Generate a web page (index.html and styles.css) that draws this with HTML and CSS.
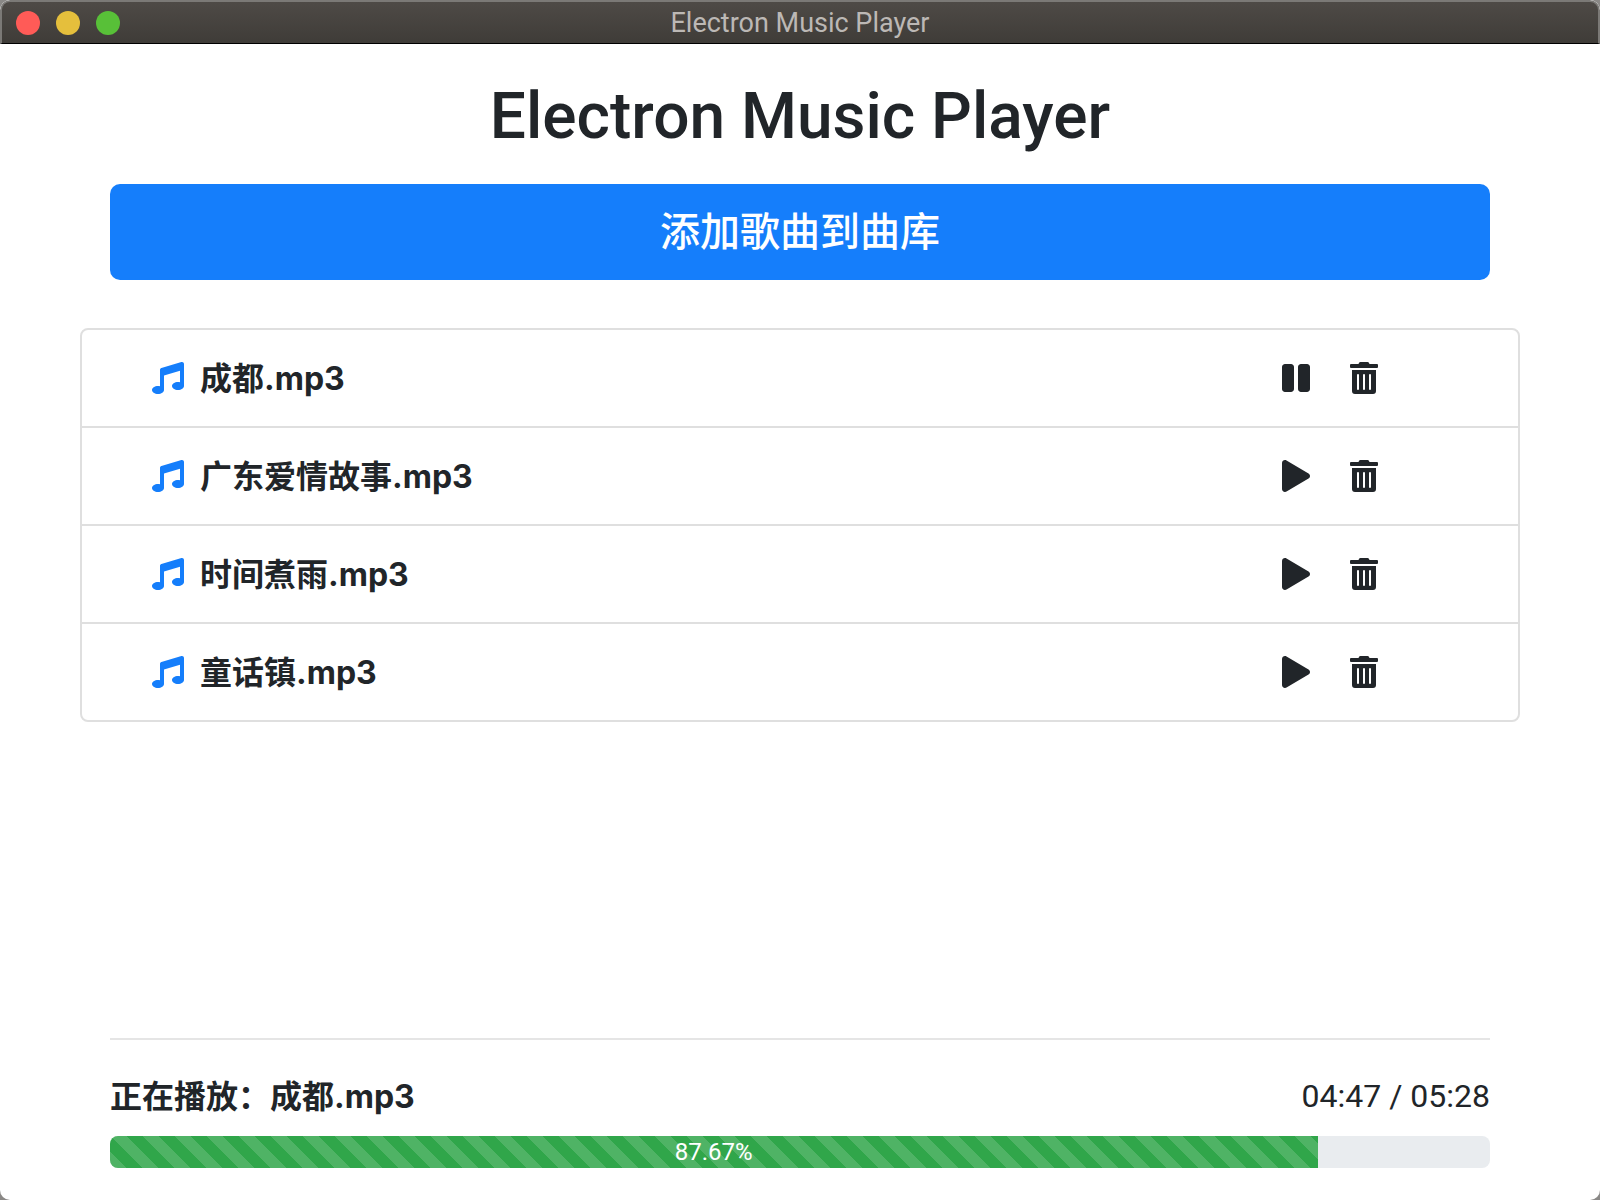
FILE: index.html
```html
<!DOCTYPE html>
<html lang="zh-CN">
<head>
<meta charset="utf-8">
<meta name="viewport" content="width=device-width, initial-scale=1">
<title>Electron Music Player</title>
<link rel="stylesheet" href="styles.css">
</head>
<body>
<svg class="sprite" aria-hidden="true">
  <symbol id="music" viewBox="0 0 512 512"><path d="M511.99 32.01c0-21.71-21.1-37.01-41.6-30.51L150.4 96c-13.3 4.2-22.4 16.5-22.4 30.5v261.42C117.7 385.55 107.1 384 96 384c-53.02 0-96 28.65-96 64s42.98 64 96 64 96-28.65 96-64V214.31l256-75.02v184.63c-10.3-2.37-20.9-3.92-32-3.92-53.02 0-96 28.65-96 64s42.98 64 96 64 96-28.65 96-64l-.01-351.99z"/></symbol>
  <symbol id="play" viewBox="0 0 448 512"><path d="M424.4 214.7L72.4 6.6C43.8-10.3 0 6.1 0 47.9V464c0 37.5 40.7 60.1 72.4 41.3l352-208c31.4-18.5 31.5-64.1 0-82.6z"/></symbol>
  <symbol id="pause" viewBox="0 0 448 512"><path d="M144 479H48c-26.5 0-48-21.5-48-48V79c0-26.5 21.5-48 48-48h96c26.5 0 48 21.5 48 48v352c0 26.5-21.5 48-48 48zm304-48V79c0-26.5-21.5-48-48-48h-96c-26.5 0-48 21.5-48 48v352c0 26.5 21.5 48 48 48h96c26.5 0 48-21.5 48-48z"/></symbol>
  <symbol id="trash" viewBox="0 0 448 512"><path d="M32 464a48 48 0 0 0 48 48h288a48 48 0 0 0 48-48V128H32zm272-256a16 16 0 0 1 32 0v224a16 16 0 0 1-32 0zm-96 0a16 16 0 0 1 32 0v224a16 16 0 0 1-32 0zm-96 0a16 16 0 0 1 32 0v224a16 16 0 0 1-32 0zM432 32H312l-9.4-18.7A24 24 0 0 0 281.1 0H166.8a23.72 23.72 0 0 0-21.4 13.3L136 32H16A16 16 0 0 0 0 48v32a16 16 0 0 0 16 16h416a16 16 0 0 0 16-16V48a16 16 0 0 0-16-16z"/></symbol>
</svg>
<div class="window">
  <header class="titlebar">
    <div class="lights">
      <button class="light close" type="button" aria-label="Close"></button>
      <button class="light minimize" type="button" aria-label="Minimize"></button>
      <button class="light zoom" type="button" aria-label="Zoom"></button>
    </div>
    <span class="window-title">Electron Music Player</span>
  </header>
  <main class="content">
    <h1 class="heading">Electron Music Player</h1>
    <button class="add-button" type="button">添加歌曲到曲库</button>
    <ul class="tracks">
      <li class="track">
        <svg class="note"><use href="#music"/></svg>
        <b class="name">成都.mp3</b>
        <div class="actions">
          <button class="action" type="button" aria-label="Pause"><svg class="icon"><use href="#pause"/></svg></button>
          <button class="action" type="button" aria-label="Delete"><svg class="icon"><use href="#trash"/></svg></button>
        </div>
      </li>
      <li class="track">
        <svg class="note"><use href="#music"/></svg>
        <b class="name">广东爱情故事.mp3</b>
        <div class="actions">
          <button class="action" type="button" aria-label="Play"><svg class="icon"><use href="#play"/></svg></button>
          <button class="action" type="button" aria-label="Delete"><svg class="icon"><use href="#trash"/></svg></button>
        </div>
      </li>
      <li class="track">
        <svg class="note"><use href="#music"/></svg>
        <b class="name">时间煮雨.mp3</b>
        <div class="actions">
          <button class="action" type="button" aria-label="Play"><svg class="icon"><use href="#play"/></svg></button>
          <button class="action" type="button" aria-label="Delete"><svg class="icon"><use href="#trash"/></svg></button>
        </div>
      </li>
      <li class="track">
        <svg class="note"><use href="#music"/></svg>
        <b class="name">童话镇.mp3</b>
        <div class="actions">
          <button class="action" type="button" aria-label="Play"><svg class="icon"><use href="#play"/></svg></button>
          <button class="action" type="button" aria-label="Delete"><svg class="icon"><use href="#trash"/></svg></button>
        </div>
      </li>
    </ul>
  </main>
  <footer class="player">
    <div class="status">
      <b class="playing">正在播放：成都.mp3</b>
      <span class="time">04:47 / 05:28</span>
    </div>
    <div class="progress" role="progressbar" aria-label="播放进度" aria-valuemin="0" aria-valuemax="100" aria-valuenow="87.67">
      <div class="bar" style="width: 87.5%">87.67%</div>
    </div>
  </footer>
</div>
</body>
</html>
```
FILE: styles.css
```css
* {
  box-sizing: border-box;
}

body {
  margin: 0;
  background: #8a8886;
  color: #212529;
  font-family: Roboto, "Noto Sans CJK SC", sans-serif;
  font-size: 32px;
  line-height: 48px;
}

button {
  margin: 0;
  padding: 0;
  border: 0;
  background: none;
  color: inherit;
  font: inherit;
  cursor: pointer;
}

.sprite {
  display: none;
}

.window {
  display: flex;
  flex-direction: column;
  min-height: 100vh;
  overflow: hidden;
  border-radius: 10px;
  background: #fff;
}

.titlebar {
  display: grid;
  grid-template-columns: 1fr auto 1fr;
  align-items: center;
  height: 44px;
  padding: 0 14px;
  border: 2px solid #7b7976;
  border-bottom: 1px solid #000;
  border-radius: 10px 10px 0 0;
  background: linear-gradient(#4e4a46, #3f3c38);
}

.lights {
  display: flex;
  gap: 16px;
}

.light {
  width: 24px;
  height: 24px;
  border-radius: 50%;
}

.close {
  background: #ff5b57;
}

.minimize {
  background: #e5bf3c;
}

.zoom {
  background: #58c038;
}

.window-title {
  color: #bcb8b5;
  font-size: 27px;
  line-height: 40px;
}

.content {
  display: flex;
  flex: 1;
  flex-direction: column;
  padding: 32px 80px;
}

.heading {
  margin: 0 0 26px;
  font-size: 64px;
  font-weight: 500;
  line-height: 82px;
  text-align: center;
}

.add-button {
  height: 96px;
  margin: 0 30px 48px;
  padding-top: 2px;
  border-radius: 10px;
  background: #157efb;
  color: #fff;
  font-size: 40px;
  font-weight: 500;
}

.tracks {
  margin: 0;
  padding: 0;
  border: 2px solid #dfdfdf;
  border-radius: 8px;
  list-style: none;
}

.track {
  display: flex;
  align-items: center;
  padding: 24px 140px 24px 70px;
}

.track + .track {
  border-top: 2px solid #dfdfdf;
}

.note {
  width: 32px;
  height: 32px;
  margin-right: 16px;
  fill: #157efb;
}

.name,
.playing {
  padding-top: 2px;
  font-family: Inter, "Noto Sans CJK SC", sans-serif;
  font-weight: 700;
  line-height: 46px;
}

.actions {
  display: flex;
  gap: 40px;
  margin-left: auto;
}

.action {
  display: flex;
}

.icon {
  width: 28px;
  height: 32px;
  fill: #212529;
}

.player {
  margin: 0 110px;
  padding: 32px 0;
  border-top: 2px solid #e5e5e5;
}

.status {
  display: flex;
  justify-content: space-between;
  margin-bottom: 16px;
}

.progress {
  overflow: hidden;
  border-radius: 8px;
  background: #e9ecef;
}

.bar {
  background-color: #30a64a;
  background-image: linear-gradient(45deg, rgba(255, 255, 255, .15) 25%, transparent 25%, transparent 50%, rgba(255, 255, 255, .15) 50%, rgba(255, 255, 255, .15) 75%, transparent 75%, transparent);
  background-size: 32px 32px;
  color: #fff;
  font-size: 24px;
  line-height: 32px;
  text-align: center;
}
```
